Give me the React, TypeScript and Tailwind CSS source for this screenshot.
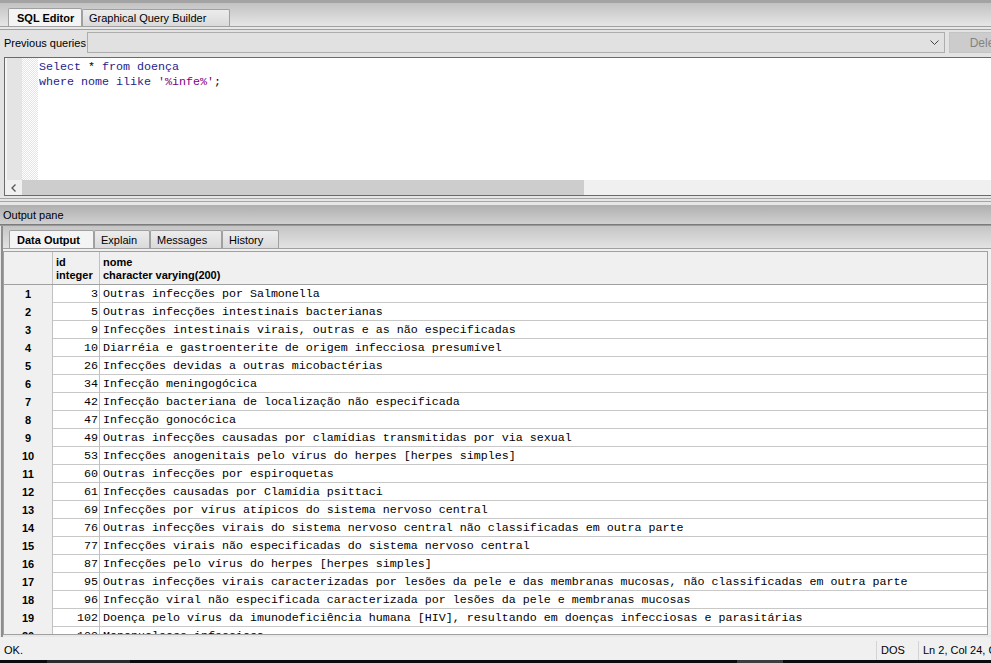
import React from "react";

const rows: [number, string][] = [
  [3, "Outras infecções por Salmonella"],
  [5, "Outras infecções intestinais bacterianas"],
  [9, "Infecções intestinais virais, outras e as não especificadas"],
  [10, "Diarréia e gastroenterite de origem infecciosa presumível"],
  [26, "Infecções devidas a outras micobactérias"],
  [34, "Infecção meningogócica"],
  [42, "Infecção bacteriana de localização não especificada"],
  [47, "Infecção gonocócica"],
  [49, "Outras infecções causadas por clamídias transmitidas por via sexual"],
  [53, "Infecções anogenitais pelo vírus do herpes [herpes simples]"],
  [60, "Outras infecções por espiroquetas"],
  [61, "Infecções causadas por Clamídia psittaci"],
  [69, "Infecções por vírus atípicos do sistema nervoso central"],
  [76, "Outras infecções virais do sistema nervoso central não classificadas em outra parte"],
  [77, "Infecções virais não especificadas do sistema nervoso central"],
  [87, "Infecções pelo vírus do herpes [herpes simples]"],
  [95, "Outras infecções virais caracterizadas por lesões da pele e das membranas mucosas, não classificadas em outra parte"],
  [96, "Infecção viral não especificada caracterizada por lesões da pele e membranas mucosas"],
  [102, "Doença pelo vírus da imunodeficiência humana [HIV], resultando em doenças infecciosas e parasitárias"],
  [109, "Mononucleose infecciosa"],
];

const mono = "font-['Liberation_Mono','Courier_New',monospace] text-[11.66px]";

function OutputTab({ label, width, active }: { label: string; width: string; active?: boolean }) {
  return (
    <div
      className={`h-[18px] ${width} pl-[6px] leading-[19px] border border-b-0 border-[#a0a0a0] rounded-t-[2px] ${
        active ? "font-bold bg-[#f4f4f4] pl-[7px]" : "bg-gradient-to-b from-[#ececec] to-[#dadada]"
      }`}
    >
      {label}
    </div>
  );
}

export default function App() {
  return (
    <div className="w-[991px] h-[663px] overflow-hidden flex flex-col bg-[#e3e3e3] text-black text-[11px] font-['Liberation_Sans',Arial,sans-serif]">
      <div className="h-[3px] bg-[#a3a3a3]" />

      {/* top tabs */}
      <div className="h-[24px] flex items-end pl-[8px] border-b border-[#a0a0a0] bg-gradient-to-b from-[#c2c2c2] to-[#e6e6e6]">
        <div className="h-[18px] w-[74px] pl-[8px] leading-[18px] font-bold bg-[#f4f4f4] border border-b-0 border-[#a0a0a0] rounded-t-[2px]">
          SQL Editor
        </div>
        <div className="h-[17px] w-[148px] pl-[6px] leading-[16px] bg-gradient-to-b from-[#ececec] to-[#dadada] border border-b-0 border-[#a0a0a0] rounded-t-[2px]">
          Graphical Query Builder
        </div>
      </div>
      <div className="h-[2px] bg-[#e8e8e8]" />
      <div className="h-[1px] bg-[#a0a0a0]" />

      {/* previous queries */}
      <div className="h-[27px] flex items-start pt-[2px] pl-[4px] overflow-hidden">
        <div className="w-[83px] shrink-0 h-[21px] leading-[23px]">Previous queries</div>
        <div className="w-[858px] shrink-0 h-[21px] border border-[#adadad] bg-[#e1e1e1] flex items-center justify-end pr-[5px]">
          <svg width="9" height="6" viewBox="0 0 9 6">
            <polyline points="0.5,0.5 4.5,4.5 8.5,0.5" fill="none" stroke="#444" strokeWidth="1" />
          </svg>
        </div>
        <div className="ml-[4px] w-[76px] shrink-0 h-[21px] border border-[#c4c4c4] bg-[#cccccc] text-[#838383] text-[12px] flex items-center justify-center">
          Delete
        </div>
      </div>

      {/* editor */}
      <div className="h-[139px] ml-[4px] border-t border-b border-l border-[#6a6a6a] bg-white flex flex-col">
        <div className="flex-1 flex min-h-0">
          <div className="w-[2px] bg-[#f4f4f4]" />
          <div className="w-[15px] bg-[#e4e4e4]" />
          <div className="w-[16px] bg-[repeating-conic-gradient(#e4e4e4_0%_25%,#ffffff_0%_50%)] bg-[length:2px_2px]" />
          <div className={`pl-[1px] pt-[2px] leading-[15px] whitespace-pre ${mono}`}>
            <div>
              <span className="text-[#1e1e8c]">Select</span> <span>*</span>{" "}
              <span className="text-[#1e1e8c]">from</span> <span className="text-[#1e1e8c]">doença</span>
            </div>
            <div>
              <span className="text-[#1e1e8c]">where nome ilike</span> <span className="text-[#800080]">'%infe%'</span>;
            </div>
          </div>
        </div>
        <div className="h-[15px] flex bg-[#f0f0f0]">
          <div className="w-[17px] flex items-center justify-center">
            <svg width="5" height="8" viewBox="0 0 5 8">
              <polyline points="4.5,0.5 1,4 4.5,7.5" fill="none" stroke="#555" strokeWidth="1.3" />
            </svg>
          </div>
          <div className="w-[562px] bg-[#cdcdcd]" />
        </div>
      </div>

      <div className="h-[2px] bg-[#e6e6e6]" />
      <div className="h-[1px] bg-[#a5a5a5]" />
      <div className="h-[2px] bg-[#e6e6e6]" />
      <div className="h-[1px] bg-[#a5a5a5]" />
      <div className="h-[3px] bg-[#e6e6e6]" />

      {/* output pane */}
      <div className="h-[19px] pl-[3px] pt-[1px] leading-[19px] bg-gradient-to-b from-[#afafaf] to-[#d0d0d0]">Output pane</div>
      <div className="h-[1px] bg-[#7c7c7c]" />
      <div className="h-[1px] bg-[#9a9a9a]" />

      <div className="h-[411px] flex">
        <div className="w-[1px] bg-[#e6e6e6]" />
        <div className="w-[2px] bg-[#8d8d8d]" />
        <div className="flex-1 flex flex-col bg-[#f0f0f0]">
          <div className="h-[22px] flex items-end pl-[6px] bg-gradient-to-b from-[#c5c5c5] to-[#e3e3e3]">
            <OutputTab label="Data Output" width="w-[85px]" active />
            <OutputTab label="Explain" width="w-[56px]" />
            <OutputTab label="Messages" width="w-[72px]" />
            <OutputTab label="History" width="w-[57px]" />
          </div>
          <div className="h-[1px] bg-[#a0a0a0]" />
          <div className="h-[2px]" />

          <div className="w-[985px] h-[384px] border border-[#a0a0a0] bg-white overflow-hidden">
            <div className="grid grid-cols-[49px_47px_1fr] h-[33px] border-b border-[#a0a0a0] bg-[#f0f0f0] font-bold leading-[13px]">
              <div className="border-r border-[#c0c0c0]" />
              <div className="border-r border-[#c0c0c0] pl-[3px] pt-[4px]">
                <div>id</div>
                <div>integer</div>
              </div>
              <div className="pl-[3px] pt-[4px]">
                <div>nome</div>
                <div>character varying(200)</div>
              </div>
            </div>
            {rows.map(([id, nome], i) => (
              <div key={i} className="grid grid-cols-[49px_47px_1fr] h-[18px] border-b border-[#c8c8c8] leading-[19px]">
                <div className="border-r border-[#c0c0c0] bg-[#f0f0f0] font-bold text-center">{i + 1}</div>
                <div className={`border-r border-[#c0c0c0] text-right pr-[1px] ${mono}`}>{id}</div>
                <div className={`pl-[3px] whitespace-nowrap ${mono}`}>{nome}</div>
              </div>
            ))}
          </div>
          <div className="h-[2px] bg-[#e8e8e8]" />
        </div>
      </div>

      {/* status bar */}
      <div className="h-[23px] flex items-start pt-[4px] bg-[#f0f0f0] whitespace-nowrap overflow-hidden leading-[19px]">
        <div className="w-[876px] shrink-0 pl-[4px]">OK.</div>
        <div className="h-[19px] w-[42px] shrink-0 border-l border-[#d4d4d4] pl-[4px]">DOS</div>
        <div className="h-[19px] shrink-0 border-l border-[#d4d4d4] pl-[4px]">Ln 2, Col 24, Ch 24</div>
      </div>
      <div className="h-[3px] flex bg-[#0b0b0b]">
        <div className="w-[47px]" />
        <div className="w-[83px] bg-[#2b2b2b]" />
        <div className="w-[607px]" />
        <div className="w-[46px] bg-[#3d3d3d]" />
      </div>
    </div>
  );
}
